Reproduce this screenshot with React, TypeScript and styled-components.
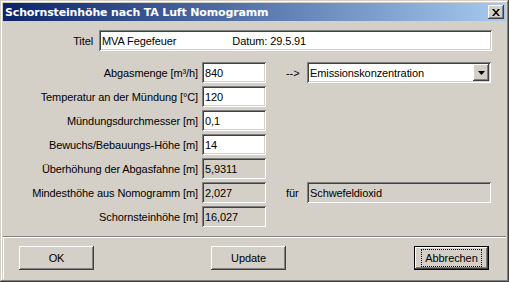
import React from 'react';
import styled, { createGlobalStyle } from 'styled-components';

const Global = createGlobalStyle`
  html, body { margin: 0; padding: 0; background: #D4D0C8; }
  body { font-family: "Liberation Sans", Arial, sans-serif; font-size: 11px; color: #000; letter-spacing: -0.1px; }
  * { box-sizing: border-box; }
`;

const Window = styled.div`
  width: 509px;
  height: 282px;
  padding: 3px;
  background: #D4D0C8;
  display: flex;
  flex-direction: column;
  box-shadow: inset -1px -1px 0 #404040, inset 1px 1px 0 #D4D0C8,
    inset -2px -2px 0 #808080, inset 2px 2px 0 #FFFFFF;
`;

const TitleBar = styled.div`
  height: 18px;
  display: flex;
  align-items: center;
  padding-left: 2px;
  background: linear-gradient(to right, #0A246A, #A6CAF0);
`;

const TitleText = styled.span`
  font-family: "DejaVu Sans", Tahoma, sans-serif;
  font-weight: bold;
  font-size: 11px;
  letter-spacing: -0.15px;
  color: #fff;
  white-space: nowrap;
`;

const raised = `
  background: #D4D0C8;
  box-shadow: inset -1px -1px 0 #404040, inset 1px 1px 0 #FFFFFF,
    inset -2px -2px 0 #808080, inset 2px 2px 0 #D4D0C8;
`;

const CloseButton = styled.div`
  ${raised}
  margin-left: auto;
  margin-right: 2px;
  width: 16px;
  height: 14px;
  display: flex;
  align-items: center;
  justify-content: center;
`;

const Client = styled.div`
  flex: 1;
  display: flex;
  flex-direction: column;
`;

const MainPanel = styled.div`
  flex: 1;
  padding-top: 9px;
`;

const TitleRow = styled.div`
  display: grid;
  grid-template-columns: 96px 393px;
  align-items: center;
  height: 21px;
`;

const Label = styled.div<{ $pad?: number }>`
  text-align: right;
  padding-right: ${(p) => p.$pad ?? 0}px;
  white-space: nowrap;
`;

const Form = styled.div`
  margin-top: 11px;
  display: grid;
  grid-template-columns: 199px 64px 20px 21px 184px;
  grid-auto-rows: 21px;
  row-gap: 3px;
  align-items: center;
`;

const FormLabel = styled.div`
  text-align: right;
  padding-right: 4px;
  white-space: nowrap;
  grid-column: 1;
`;

const Field = styled.div<{ $ro?: boolean }>`
  height: 21px;
  display: flex;
  align-items: center;
  padding: 0 3px;
  white-space: pre;
  background: ${(p) => (p.$ro ? '#D4D0C8' : '#FFFFFF')};
  box-shadow: inset 1px 1px 0 #808080, inset -1px -1px 0 #FFFFFF,
    inset 2px 2px 0 #404040, inset -2px -2px 0 #D4D0C8;
`;

const SmallText = styled.div`
  grid-column: 4;
  white-space: nowrap;
`;

const Combo = styled(Field)`
  grid-column: 5;
  padding-right: 2px;
`;

const ComboText = styled.span`
  flex: 1;
`;

const DropButton = styled.div`
  ${raised}
  width: 16px;
  height: 17px;
  display: flex;
  align-items: center;
  justify-content: center;
`;

const BottomPanel = styled.div`
  height: 43px;
  display: flex;
  align-items: flex-start;
  padding: 10px 17px 0 16px;
  box-shadow: inset 0 1px 0 #808080, inset 1px 2px 0 #FFFFFF;
`;

const Button = styled.div<{ $default?: boolean; $ml?: string }>`
  ${raised}
  width: 75px;
  height: 24px;
  display: flex;
  align-items: center;
  justify-content: center;
  margin-left: ${(p) => p.$ml ?? '0'};
  ${(p) =>
    p.$default
      ? `box-shadow: inset 0 0 0 1px #000, inset -2px -2px 0 #404040, inset 2px 2px 0 #FFFFFF, inset -3px -3px 0 #808080, inset 3px 3px 0 #D4D0C8;`
      : ''}
`;

const FocusRing = styled.span`
  padding: 2px 3px;
  outline: 1px dotted #000;
`;

const rows: { label: string; value: string; ro?: boolean }[] = [
  { label: 'Abgasmenge [m³/h]', value: '840' },
  { label: 'Temperatur an der Mündung [°C]', value: '120' },
  { label: 'Mündungsdurchmesser [m]', value: '0,1' },
  { label: 'Bewuchs/Bebauungs-Höhe [m]', value: '14' },
  { label: 'Überhöhung der Abgasfahne [m]', value: '5,9311', ro: true },
  { label: 'Mindesthöhe aus Nomogramm [m]', value: '2,027', ro: true },
  { label: 'Schornsteinhöhe [m]', value: '16,027', ro: true },
];

export default function App() {
  return (
    <>
      <Global />
      <Window>
        <TitleBar>
          <TitleText>Schornsteinhöhe nach TA Luft Nomogramm</TitleText>
          <CloseButton>
            <svg width="8" height="7" viewBox="0 0 8 7">
              <path d="M0 0h2l2 2.5L6 0h2L5 3.5 8 7H6L4 4.5 2 7H0l3-3.5z" fill="#000" />
            </svg>
          </CloseButton>
        </TitleBar>
        <Client>
          <MainPanel>
            <TitleRow>
              <Label $pad={6}>Titel</Label>
              <Field>
                <span>MVA Fegefeuer</span>
                <span style={{ marginLeft: 56 }}>Datum: 29.5.91</span>
              </Field>
            </TitleRow>
            <Form>
              {rows.map((r, i) => (
                <React.Fragment key={r.label}>
                  <FormLabel style={{ gridRow: i + 1 }}>{r.label}</FormLabel>
                  <Field $ro={r.ro} style={{ gridColumn: 2, gridRow: i + 1 }}>
                    {r.value}
                  </Field>
                  {i === 0 && (
                    <>
                      <SmallText style={{ gridRow: 1 }}>--&gt;</SmallText>
                      <Combo style={{ gridRow: 1 }}>
                        <ComboText>Emissionskonzentration</ComboText>
                        <DropButton>
                          <svg width="7" height="4" viewBox="0 0 7 4">
                            <path d="M0 0h7L3.5 4z" fill="#000" />
                          </svg>
                        </DropButton>
                      </Combo>
                    </>
                  )}
                  {i === 5 && (
                    <>
                      <SmallText style={{ gridRow: 6 }}>für</SmallText>
                      <Combo $ro style={{ gridRow: 6 }}>
                        Schwefeldioxid
                      </Combo>
                    </>
                  )}
                </React.Fragment>
              ))}
            </Form>
          </MainPanel>
          <BottomPanel>
            <Button>OK</Button>
            <Button $ml="117px">Update</Button>
            <Button $ml="auto" $default>
              <FocusRing>Abbrechen</FocusRing>
            </Button>
          </BottomPanel>
        </Client>
      </Window>
    </>
  );
}
